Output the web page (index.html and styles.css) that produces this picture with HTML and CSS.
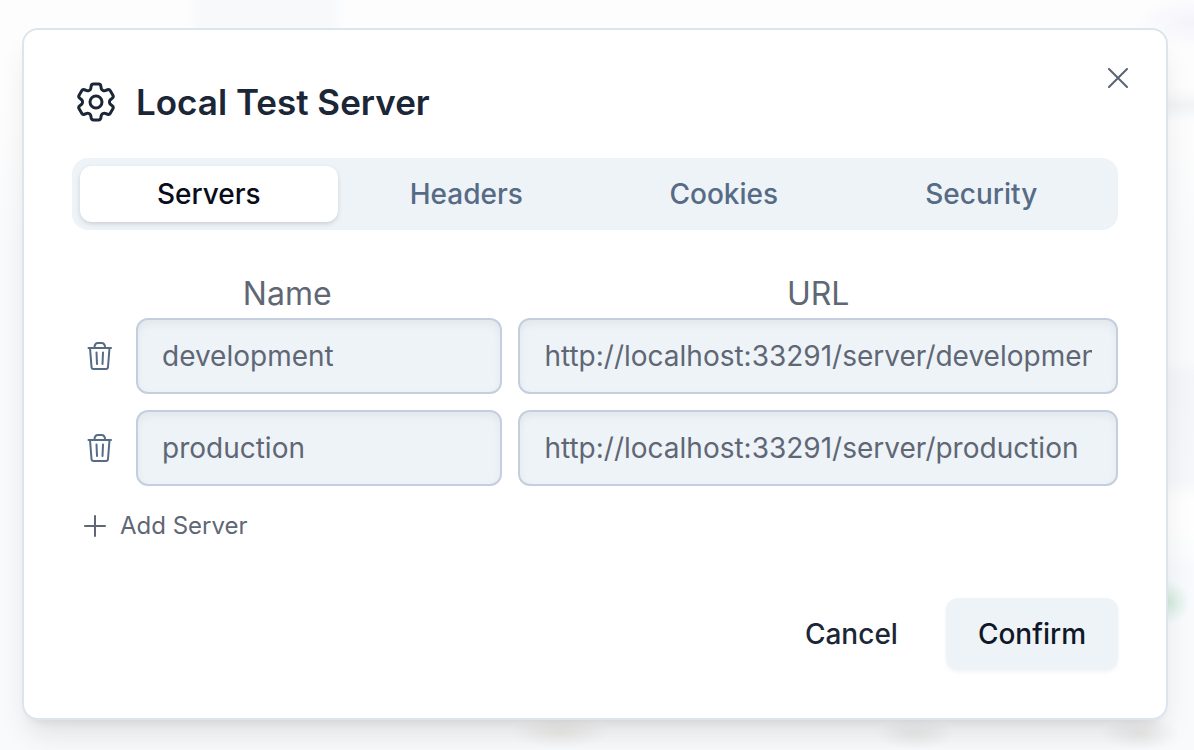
FILE: index.html
```html
<!DOCTYPE html>
<html lang="en">
<head>
<meta charset="utf-8">
<title>Local Test Server</title>
<link rel="stylesheet" href="styles.css">
</head>
<body>
<svg class="symbols" aria-hidden="true">
  <symbol id="trash" viewBox="0 0 32 32" fill="none" stroke="currentColor" stroke-width="2" stroke-linecap="round" stroke-linejoin="round">
    <path d="M6 8l1.500 19c.1 1.2.9 2 2 2h12.500c1.100 0 1.900-.8 2-2L25.500 8M4.500 8h22.500M10.500 7.500C10.500 4.500 12 3 14 3h3.500C19.500 3 21 4.500 21 7.500M12.500 12.500l.5 11.500M19 12.500l-.5 11.500"/>
  </symbol>
</svg>
<main class="dialog" role="dialog" aria-labelledby="title">
  <button class="close" type="button" aria-label="Close">
    <svg viewBox="0 0 20 20" fill="none" stroke="currentColor" stroke-width="2" stroke-linecap="round"><path d="M1 1l18 18M19 1L1 19"/></svg>
  </button>
  <header class="header">
    <svg class="gear" viewBox="0 0 24 24" fill="none" stroke="currentColor" stroke-width="1.5" stroke-linecap="round" stroke-linejoin="round" aria-hidden="true">
      <path d="M9.594 3.94c.09-.542.56-.94 1.11-.94h2.593c.55 0 1.02.398 1.11.94l.213 1.281c.063.374.313.686.645.87.074.04.147.083.22.127.325.196.72.257 1.075.124l1.217-.456a1.125 1.125 0 0 1 1.37.49l1.296 2.247a1.125 1.125 0 0 1-.26 1.431l-1.003.827c-.293.241-.438.613-.43.992a7.723 7.723 0 0 1 0 .255c-.008.378.137.75.43.991l1.004.827c.424.35.534.955.26 1.43l-1.298 2.247a1.125 1.125 0 0 1-1.369.491l-1.217-.456c-.355-.133-.75-.072-1.076.124a6.47 6.47 0 0 1-.22.128c-.331.183-.581.495-.644.869l-.213 1.281c-.09.543-.56.94-1.11.94h-2.594c-.55 0-1.019-.398-1.11-.94l-.213-1.281c-.062-.374-.312-.686-.644-.87a6.52 6.52 0 0 1-.22-.127c-.325-.196-.72-.257-1.076-.124l-1.217.456a1.125 1.125 0 0 1-1.369-.49l-1.297-2.247a1.125 1.125 0 0 1 .26-1.431l1.004-.827c.292-.24.437-.613.43-.991a6.932 6.932 0 0 1 0-.255c.007-.38-.138-.751-.43-.992l-1.004-.827a1.125 1.125 0 0 1-.26-1.43l1.297-2.247a1.125 1.125 0 0 1 1.37-.491l1.216.456c.356.133.751.072 1.076-.124.072-.044.146-.086.22-.128.332-.183.582-.495.644-.869l.214-1.28Z"/>
      <path d="M15 12a3 3 0 1 1-6 0 3 3 0 0 1 6 0Z"/>
    </svg>
    <h1 class="title" id="title">Local Test Server</h1>
  </header>
  <div class="tabs" role="tablist">
    <button class="tab tab-active" type="button" role="tab" aria-selected="true">Servers</button>
    <button class="tab" type="button" role="tab" aria-selected="false">Headers</button>
    <button class="tab" type="button" role="tab" aria-selected="false">Cookies</button>
    <button class="tab" type="button" role="tab" aria-selected="false">Security</button>
  </div>
  <form class="form">
    <div class="servers">
      <span class="column column-name" id="col-name">Name</span>
      <span class="column" id="col-url">URL</span>
      <button class="remove" type="button" aria-label="Remove development"><svg aria-hidden="true"><use href="#trash"/></svg></button>
      <input class="field" type="text" aria-labelledby="col-name" value="development">
      <input class="field" type="text" aria-labelledby="col-url" value="http://localhost:33291/server/development">
      <button class="remove" type="button" aria-label="Remove production"><svg aria-hidden="true"><use href="#trash"/></svg></button>
      <input class="field" type="text" aria-labelledby="col-name" value="production">
      <input class="field" type="text" aria-labelledby="col-url" value="http://localhost:33291/server/production">
    </div>
    <button class="add" type="button">
      <svg viewBox="0 0 22 22" fill="none" stroke="currentColor" stroke-width="2" stroke-linecap="round" aria-hidden="true"><path d="M11 1v20M1 11h20"/></svg>
      Add Server
    </button>
    <footer class="actions">
      <button class="button" type="button">Cancel</button>
      <button class="button button-confirm" type="submit">Confirm</button>
    </footer>
  </form>
</main>
</body>
</html>
```

FILE: styles.css
```css
* { box-sizing: border-box; }

body {
  margin: 0;
  padding: 28px 26px 30px 22px;
  min-height: 100vh;
  font-family: Inter, "Liberation Sans", sans-serif;
  color: #1b2636;
  background:
    radial-gradient(circle at 1168px 602px, #d3eadd 0, transparent 22px),
    radial-gradient(ellipse 60px 26px at 100% 22px, #f4f3fb 0, transparent 100%),
    radial-gradient(ellipse 50px 16px at 560px 732px, #ecebe9 0, transparent 100%),
    radial-gradient(ellipse 40px 16px at 915px 734px, #ebebeb 0, transparent 100%),
    radial-gradient(ellipse 40px 16px at 1140px 734px, #ebebeb 0, transparent 100%),
    linear-gradient(90deg, transparent 188px, #f7f9fb 200px, #f7f9fb 330px, transparent 346px) top / 100% 60px no-repeat,
    linear-gradient(transparent 88px, #f1f3f5 106px, transparent 122px, transparent 360px, #f3f5f8 376px, #f5f7fa 480px, #fefefe 500px, #fefefe 530px, #f7fafd 570px, transparent 640px) right / 60px 100% no-repeat,
    linear-gradient(#fdfdfe 0, #fdfdfe 110px, #f9fafb 240px, #f9fafc 100%);
}

button, input { font: inherit; color: inherit; }

button {
  padding: 0;
  border: 0;
  background: none;
}

svg { display: block; }

.symbols {
  position: absolute;
  width: 0;
  height: 0;
}

.dialog {
  position: relative;
  padding: 48px;
  border: 2px solid #dce5ed;
  border-radius: 16px;
  background: #fff;
  box-shadow: 0 20px 30px -6px rgba(0, 0, 0, 0.1), 0 8px 12px -8px rgba(0, 0, 0, 0.1);
}

.close {
  position: absolute;
  top: 38px;
  right: 38px;
  color: #5b6472;
}

.close svg { width: 20px; height: 20px; }

.header {
  display: flex;
  align-items: center;
  gap: 16px;
}

.gear { width: 48px; height: 48px; }

.title {
  margin: 0;
  font-size: 35px;
  font-weight: 600;
  line-height: 48px;
}

.tabs {
  display: grid;
  grid-template-columns: repeat(4, 1fr);
  margin-top: 32px;
  padding: 8px;
  border-radius: 16px;
  background: #eef3f8;
}

.tab {
  height: 56px;
  border-radius: 12px;
  font-size: 28px;
  font-weight: 500;
  color: #566b85;
}

.tab-active {
  color: #090d1a;
  background: #fff;
  box-shadow: 0 2px 6px rgba(0, 0, 0, 0.08), 0 2px 4px -1px rgba(0, 0, 0, 0.1);
}

.form { margin-top: 44px; }

.servers {
  display: grid;
  grid-template-columns: 48px 11fr 18fr;
  gap: 16px;
  align-items: center;
}

.column {
  margin-bottom: -12px;
  text-align: center;
  font-size: 32px;
  line-height: 40px;
  color: #5f6775;
}

.column-name { grid-column: 1 / 3; }

.remove {
  justify-self: center;
  padding-left: 8px;
  color: #566b85;
}

.remove svg { width: 32px; height: 32px; }

.field {
  width: 100%;
  height: 76px;
  padding: 0 24px;
  border: 2px solid #c3cfdf;
  border-radius: 12px;
  font-size: 28px;
  color: #5f6775;
  background: #eef3f8;
  box-shadow: inset 0 4px 8px rgba(0, 0, 0, 0.05);
}

.add {
  display: flex;
  align-items: center;
  gap: 14px;
  margin: 24px 0 0 12px;
  font-size: 24px;
  line-height: 32px;
  color: #5f6775;
}

.add svg { width: 22px; height: 22px; }

.actions {
  display: flex;
  justify-content: flex-end;
  gap: 16px;
  margin-top: 56px;
}

.button {
  height: 72px;
  padding: 0 32px;
  border-radius: 12px;
  font-size: 28px;
  font-weight: 500;
}

.button-confirm {
  color: #101828;
  background: #eef3f8;
  box-shadow: 0 2px 4px rgba(0, 0, 0, 0.05);
}
```
